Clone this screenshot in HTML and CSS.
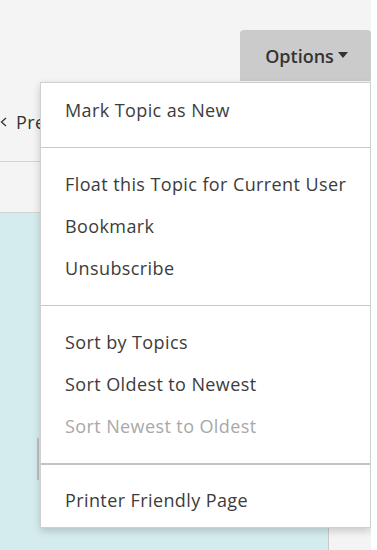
FILE: index.html
```html
<!DOCTYPE html>
<html lang="en">
<head>
  <meta charset="UTF-8">
  <title>Topic Options</title>
  <link rel="stylesheet" href="styles.css">
</head>
<body>
  <div class="page">
    <div class="toolbar">
      <div class="options">
        <button class="options-btn">Options <span class="caret"></span></button>
        <ul class="menu">
          <li>Mark Topic as New</li>
          <li class="sep"></li>
          <li>Float this Topic for Current User</li>
          <li>Bookmark</li>
          <li>Unsubscribe</li>
          <li class="sep"></li>
          <li>Sort by Topics</li>
          <li>Sort Oldest to Newest</li>
          <li class="off">Sort Newest to Oldest</li>
          <li class="sep dark"></li>
          <li>Printer Friendly Page</li>
        </ul>
      </div>
    </div>
    <div class="pager">
      <svg class="chev" width="7" height="10" viewBox="0 0 7 10"><path d="M6 1 L1.5 5 L6 9" fill="none" stroke="#333" stroke-width="1.3"/></svg>
      <span>Previous Topic</span>
    </div>
    <div class="gap"></div>
    <div class="content">
      <div class="post">
        <div class="field"></div>
      </div>
      <div class="side"></div>
    </div>
  </div>
</body>
</html>
```

FILE: styles.css
```css
body { margin:0; background:#fff; font-family:"Open Sans", Lato, sans-serif; color:#333; }
.page { width:371px; height:550px; background:#f4f4f4; display:flex; flex-direction:column; overflow:hidden; }
.toolbar { height:81px; display:flex; justify-content:flex-end; align-items:flex-end; }
.options { position:relative; }
.options-btn { width:131px; height:51px; border:0; border-radius:4px 4px 0 0; background:#cbcbcb;
               font-family:inherit; font-size:18px; font-weight:600; color:#333; padding:0 0 0 2px;
               display:flex; align-items:center; justify-content:center; gap:4px; }
.caret { width:0; height:0; border-left:5px solid transparent; border-right:5px solid transparent;
         border-top:6px solid #333; margin-top:-2px; }
.menu { position:absolute; right:0; top:52px; width:329px; margin:0; padding:6px 0; list-style:none;
        background:#fff; border:1px solid #d0d0d0; box-shadow:0 3px 8px rgba(0,0,0,0.18); z-index:2; }
.menu li { height:42px; line-height:42px; padding-left:24px; font-size:18px; letter-spacing:0.4px;
           color:#3c3c3c; white-space:nowrap; }
.menu li.off { color:#a8a8a8; }
.menu li.sep { height:0; border-top:1px solid #c8c8c8; margin:16px 0 15px; padding:0; }
.menu li.sep.dark { border-top:2px solid #c4c4c4; margin-bottom:14px; }
.pager { height:81px; border-bottom:1px solid #d4d4d4; font-size:18px; letter-spacing:0.4px; box-sizing:border-box;
         display:flex; align-items:center; gap:9px; padding-top:1px; }
.chev { flex:none; }
.gap { height:50px; border-bottom:1px solid #d4d4d4; }
.content { flex:1; display:flex; }
.post { width:329px; background:#d5ecee; border-right:1px solid #c9c9c9; padding-top:225px; box-sizing:border-box; }
.field { margin-left:37px; height:42px; border-left:2px solid #c0c0c0; }
.side { flex:1; }
```
